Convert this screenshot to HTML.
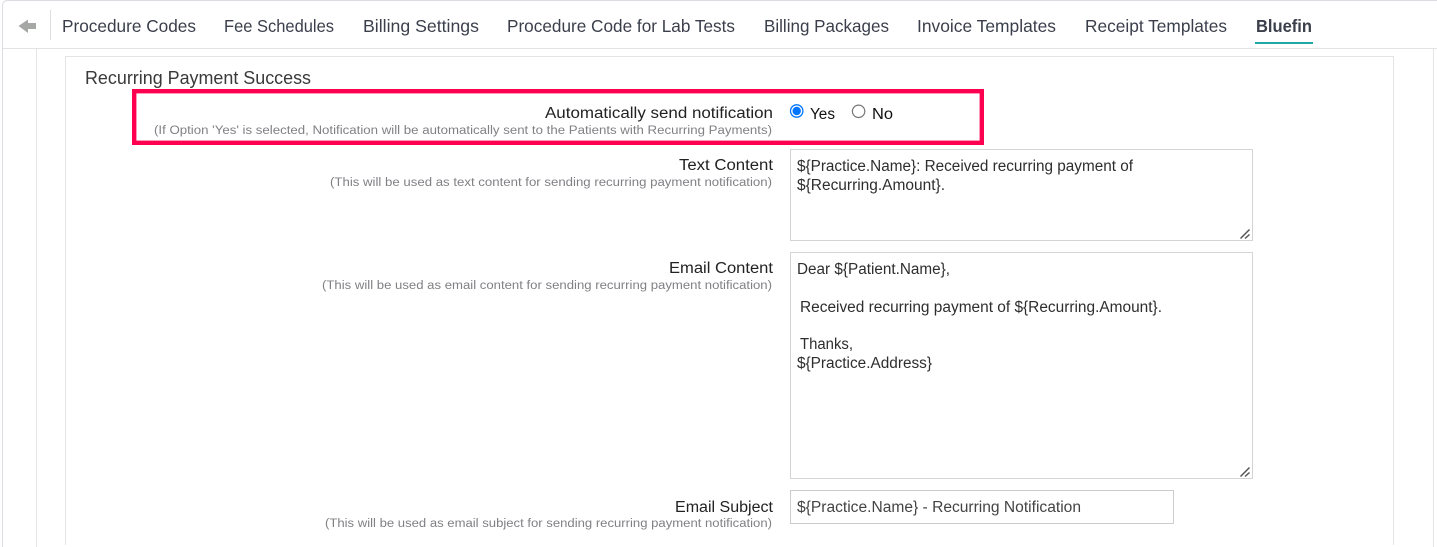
<!DOCTYPE html>
<html lang="en">
<head>
<meta charset="utf-8">
<title>Recurring Payment Success</title>
<style>
html,body{margin:0;padding:0;background:#fff;width:1437px;height:547px;overflow:hidden}
svg{display:block;position:absolute;left:0;top:0}
text{font-family:"Liberation Sans",sans-serif}
.n{font-size:17.5px;fill:#3a3f4b}
.l{font-size:15.5px;fill:#222}
.h{font-size:11.5px;fill:#808085}
.t{font-size:15.5px;fill:#2e2e2e}
</style>
</head>
<body>
<svg width="1437" height="547" viewBox="0 0 1437 547" xmlns="http://www.w3.org/2000/svg">
<!-- frame -->
<path d="M2.5 547V6Q2.5 .5 8 .5H1437" fill="none" stroke="#dcdce2"/>
<rect x="3" y="48" width="1434" height="1" fill="#e3e3e3"/>
<rect x="36" y="49" width="1" height="498" fill="#e5e5e5"/>
<rect x="1433" y="49" width="1" height="498" fill="#e5e5e5"/>
<path d="M65.5 545V56.5H1393.5V545" fill="none" stroke="#e4e4e4"/>
<!-- back arrow -->
<path d="M18.500 26L28 19.500V23H36V29H28V33Z" fill="#a6a8a6"/>
<rect x="50" y="10" width="1" height="30" fill="#dedede"/>
<!-- nav -->
<text class="n" x="62" y="32" textLength="134" lengthAdjust="spacingAndGlyphs">Procedure Codes</text>
<text class="n" x="224" y="32" textLength="110" lengthAdjust="spacingAndGlyphs">Fee Schedules</text>
<text class="n" x="363" y="32" textLength="116" lengthAdjust="spacingAndGlyphs">Billing Settings</text>
<text class="n" x="507" y="32" textLength="228" lengthAdjust="spacingAndGlyphs">Procedure Code for Lab Tests</text>
<text class="n" x="764" y="32" textLength="125" lengthAdjust="spacingAndGlyphs">Billing Packages</text>
<text class="n" x="917" y="32" textLength="139" lengthAdjust="spacingAndGlyphs">Invoice Templates</text>
<text class="n" x="1085" y="32" textLength="142" lengthAdjust="spacingAndGlyphs">Receipt Templates</text>
<text class="n" x="1256" y="32" textLength="56" lengthAdjust="spacingAndGlyphs" font-weight="700">Bluefin</text>
<rect x="1255" y="42" width="58" height="2" fill="#20a8a8"/>
<!-- heading -->
<text x="85" y="84" font-size="18.500" fill="#3a3a3a" textLength="226" lengthAdjust="spacingAndGlyphs">Recurring Payment Success</text>
<!-- highlight -->
<rect x="134.200" y="91.200" width="847.600" height="51.600" fill="none" stroke="#ff0050" stroke-width="4.400"/>
<!-- row 1 -->
<text class="l" x="545" y="118" textLength="228" lengthAdjust="spacingAndGlyphs">Automatically send notification</text>
<text class="h" x="154" y="134" textLength="618" lengthAdjust="spacingAndGlyphs">(If Option 'Yes' is selected, Notification will be automatically sent to the Patients with Recurring Payments)</text>
<circle cx="796.700" cy="111" r="6.200" fill="#fff" stroke="#0075ff" stroke-width="1.300"/>
<circle cx="796.700" cy="111" r="4.200" fill="#0075ff"/>
<text class="t" x="810" y="119" textLength="25" lengthAdjust="spacingAndGlyphs" style="fill:#111">Yes</text>
<circle cx="858.600" cy="111.300" r="6.200" fill="#fff" stroke="#767676" stroke-width="1.200"/>
<text class="t" x="872" y="119" textLength="21" lengthAdjust="spacingAndGlyphs" style="fill:#111">No</text>
<!-- text content -->
<text class="l" x="679" y="170" textLength="94" lengthAdjust="spacingAndGlyphs">Text Content</text>
<text class="h" x="330" y="186" textLength="442" lengthAdjust="spacingAndGlyphs">(This will be used as text content for sending recurring payment notification)</text>
<rect x="790.500" y="149.500" width="462" height="91" fill="#fff" stroke="#d4d4d4"/>
<text class="t" x="797" y="171" textLength="336" lengthAdjust="spacingAndGlyphs">${Practice.Name}: Received recurring payment of</text>
<text class="t" x="797" y="190" textLength="148" lengthAdjust="spacingAndGlyphs">${Recurring.Amount}.</text>
<path d="M1240.500 238.500L1249.500 229.500M1245 238.500L1249.500 234.500" stroke="#555" stroke-width="1.500" fill="none"/>
<!-- email content -->
<text class="l" x="669" y="273" textLength="104" lengthAdjust="spacingAndGlyphs">Email Content</text>
<text class="h" x="322" y="289" textLength="450" lengthAdjust="spacingAndGlyphs">(This will be used as email content for sending recurring payment notification)</text>
<rect x="790.500" y="252.500" width="462" height="226" fill="#fff" stroke="#d4d4d4"/>
<text class="t" x="797" y="274" textLength="153" lengthAdjust="spacingAndGlyphs">Dear ${Patient.Name},</text>
<text class="t" x="800" y="312" textLength="362" lengthAdjust="spacingAndGlyphs">Received recurring payment of ${Recurring.Amount}.</text>
<text class="t" x="800" y="349" textLength="53" lengthAdjust="spacingAndGlyphs">Thanks,</text>
<text class="t" x="797" y="368" textLength="135" lengthAdjust="spacingAndGlyphs">${Practice.Address}</text>
<path d="M1240.500 476.500L1249.500 467.500M1245 476.500L1249.500 472.500" stroke="#555" stroke-width="1.500" fill="none"/>
<!-- email subject -->
<text class="l" x="675" y="512" textLength="98" lengthAdjust="spacingAndGlyphs">Email Subject</text>
<text class="h" x="325" y="527" textLength="447" lengthAdjust="spacingAndGlyphs">(This will be used as email subject for sending recurring payment notification)</text>
<rect x="790.500" y="490.500" width="383" height="33" fill="#fff" stroke="#cccccc"/>
<text class="t" x="797" y="512" textLength="284" lengthAdjust="spacingAndGlyphs" style="fill:#444">${Practice.Name} - Recurring Notification</text>
</svg>
</body>
</html>
